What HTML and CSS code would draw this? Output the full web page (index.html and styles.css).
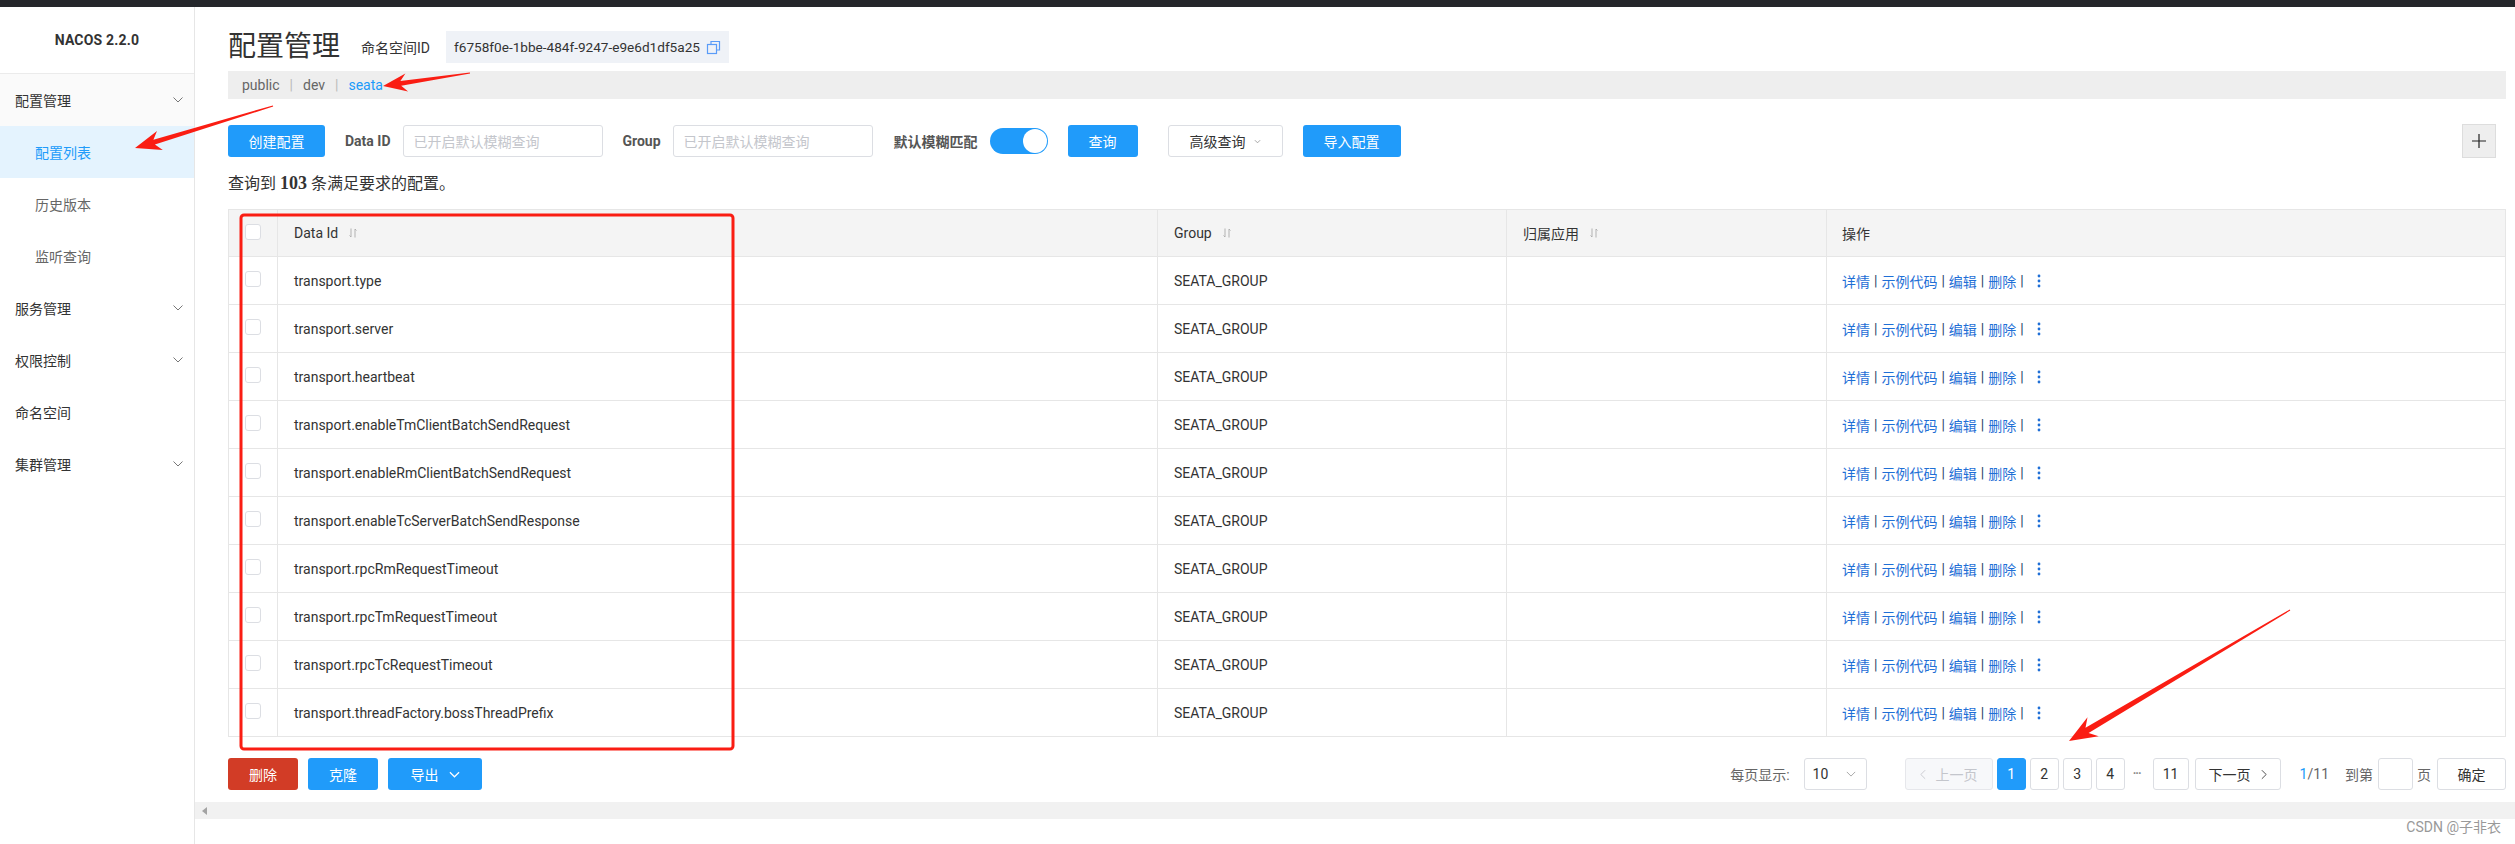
FILE: index.html
```html
<!DOCTYPE html>
<html lang="zh-CN">
<head>
<meta charset="utf-8">
<title>NACOS 配置管理</title>
<link rel="stylesheet" href="styles.css">
</head>
<body>
<div class="topbar"></div>
<div class="layout">
  <aside class="sidebar">
    <div class="logo">NACOS 2.2.0</div>
    <nav class="menu">
      <div class="menu-head open">配置管理<svg class="chev" viewBox="0 0 10 6"><polyline points="0.5,0.5 5,5 9.5,0.5"/></svg></div>
      <div class="menu-sub active">配置列表</div>
      <div class="menu-sub">历史版本</div>
      <div class="menu-sub">监听查询</div>
      <div class="menu-head">服务管理<svg class="chev" viewBox="0 0 10 6"><polyline points="0.5,0.5 5,5 9.5,0.5"/></svg></div>
      <div class="menu-head">权限控制<svg class="chev" viewBox="0 0 10 6"><polyline points="0.5,0.5 5,5 9.5,0.5"/></svg></div>
      <div class="menu-head">命名空间</div>
      <div class="menu-head">集群管理<svg class="chev" viewBox="0 0 10 6"><polyline points="0.5,0.5 5,5 9.5,0.5"/></svg></div>
    </nav>
  </aside>
  <main class="main">
    <div class="content">
      <div class="page-head">
        <h1 class="title">配置管理</h1>
        <span class="ns-label">命名空间ID</span>
        <span class="ns-id">f6758f0e-1bbe-484f-9247-e9e6d1df5a25<svg class="copy" viewBox="0 0 15 15"><path d="M5 4V1.5h8.5V10H11"/><rect x="1.5" y="4.5" width="9" height="9"/></svg></span>
      </div>
      <div class="crumbs">
        <span>public</span><span class="sep">|</span><span>dev</span><span class="sep">|</span><span class="cur">seata</span>
      </div>
      <div class="toolbar">
        <button class="btn primary w-create">创建配置</button>
        <span class="label">Data ID</span>
        <span class="input">已开启默认模糊查询</span>
        <span class="label">Group</span>
        <span class="input">已开启默认模糊查询</span>
        <span class="label fuzzy">默认模糊匹配</span>
        <span class="switch"><span class="knob"></span></span>
        <button class="btn primary w-query">查询</button>
        <button class="btn normal w-adv">高级查询<svg class="mini-chev" viewBox="0 0 8 5"><polyline points="1,1 4,4 7,1"/></svg></button>
        <button class="btn primary w-import">导入配置</button>
        <button class="btn plus"><svg viewBox="0 0 16 16"><path d="M8 1v14M1 8h14"/></svg></button>
      </div>
      <div class="result">查询到 <strong>103</strong> 条满足要求的配置。</div>
      <div class="table">
        <div class="row head">
          <div class="cell ck"><span class="checkbox"></span></div>
          <div class="cell">Data Id<svg class="sort" viewBox="0 0 8 10"><path d="M2 0.5v8.5M0.5 7.5L2 9M6 9.5V1M6 1L7.5 2.5"/></svg></div>
          <div class="cell">Group<svg class="sort" viewBox="0 0 8 10"><path d="M2 0.5v8.5M0.5 7.5L2 9M6 9.5V1M6 1L7.5 2.5"/></svg></div>
          <div class="cell">归属应用<svg class="sort" viewBox="0 0 8 10"><path d="M2 0.5v8.5M0.5 7.5L2 9M6 9.5V1M6 1L7.5 2.5"/></svg></div>
          <div class="cell">操作</div>
        </div>
        <div class="row"><div class="cell ck"><span class="checkbox"></span></div><div class="cell">transport.type</div><div class="cell">SEATA_GROUP</div><div class="cell"></div><div class="cell ops"><a>详情</a><i>|</i><a>示例代码</a><i>|</i><a>编辑</a><i>|</i><a>删除</a><i>|</i><svg class="more" viewBox="0 0 4 14"><circle cx="2" cy="2" r="1.4"/><circle cx="2" cy="7" r="1.4"/><circle cx="2" cy="12" r="1.4"/></svg></div></div>
        <div class="row"><div class="cell ck"><span class="checkbox"></span></div><div class="cell">transport.server</div><div class="cell">SEATA_GROUP</div><div class="cell"></div><div class="cell ops"><a>详情</a><i>|</i><a>示例代码</a><i>|</i><a>编辑</a><i>|</i><a>删除</a><i>|</i><svg class="more" viewBox="0 0 4 14"><circle cx="2" cy="2" r="1.4"/><circle cx="2" cy="7" r="1.4"/><circle cx="2" cy="12" r="1.4"/></svg></div></div>
        <div class="row"><div class="cell ck"><span class="checkbox"></span></div><div class="cell">transport.heartbeat</div><div class="cell">SEATA_GROUP</div><div class="cell"></div><div class="cell ops"><a>详情</a><i>|</i><a>示例代码</a><i>|</i><a>编辑</a><i>|</i><a>删除</a><i>|</i><svg class="more" viewBox="0 0 4 14"><circle cx="2" cy="2" r="1.4"/><circle cx="2" cy="7" r="1.4"/><circle cx="2" cy="12" r="1.4"/></svg></div></div>
        <div class="row"><div class="cell ck"><span class="checkbox"></span></div><div class="cell">transport.enableTmClientBatchSendRequest</div><div class="cell">SEATA_GROUP</div><div class="cell"></div><div class="cell ops"><a>详情</a><i>|</i><a>示例代码</a><i>|</i><a>编辑</a><i>|</i><a>删除</a><i>|</i><svg class="more" viewBox="0 0 4 14"><circle cx="2" cy="2" r="1.4"/><circle cx="2" cy="7" r="1.4"/><circle cx="2" cy="12" r="1.4"/></svg></div></div>
        <div class="row"><div class="cell ck"><span class="checkbox"></span></div><div class="cell">transport.enableRmClientBatchSendRequest</div><div class="cell">SEATA_GROUP</div><div class="cell"></div><div class="cell ops"><a>详情</a><i>|</i><a>示例代码</a><i>|</i><a>编辑</a><i>|</i><a>删除</a><i>|</i><svg class="more" viewBox="0 0 4 14"><circle cx="2" cy="2" r="1.4"/><circle cx="2" cy="7" r="1.4"/><circle cx="2" cy="12" r="1.4"/></svg></div></div>
        <div class="row"><div class="cell ck"><span class="checkbox"></span></div><div class="cell">transport.enableTcServerBatchSendResponse</div><div class="cell">SEATA_GROUP</div><div class="cell"></div><div class="cell ops"><a>详情</a><i>|</i><a>示例代码</a><i>|</i><a>编辑</a><i>|</i><a>删除</a><i>|</i><svg class="more" viewBox="0 0 4 14"><circle cx="2" cy="2" r="1.4"/><circle cx="2" cy="7" r="1.4"/><circle cx="2" cy="12" r="1.4"/></svg></div></div>
        <div class="row"><div class="cell ck"><span class="checkbox"></span></div><div class="cell">transport.rpcRmRequestTimeout</div><div class="cell">SEATA_GROUP</div><div class="cell"></div><div class="cell ops"><a>详情</a><i>|</i><a>示例代码</a><i>|</i><a>编辑</a><i>|</i><a>删除</a><i>|</i><svg class="more" viewBox="0 0 4 14"><circle cx="2" cy="2" r="1.4"/><circle cx="2" cy="7" r="1.4"/><circle cx="2" cy="12" r="1.4"/></svg></div></div>
        <div class="row"><div class="cell ck"><span class="checkbox"></span></div><div class="cell">transport.rpcTmRequestTimeout</div><div class="cell">SEATA_GROUP</div><div class="cell"></div><div class="cell ops"><a>详情</a><i>|</i><a>示例代码</a><i>|</i><a>编辑</a><i>|</i><a>删除</a><i>|</i><svg class="more" viewBox="0 0 4 14"><circle cx="2" cy="2" r="1.4"/><circle cx="2" cy="7" r="1.4"/><circle cx="2" cy="12" r="1.4"/></svg></div></div>
        <div class="row"><div class="cell ck"><span class="checkbox"></span></div><div class="cell">transport.rpcTcRequestTimeout</div><div class="cell">SEATA_GROUP</div><div class="cell"></div><div class="cell ops"><a>详情</a><i>|</i><a>示例代码</a><i>|</i><a>编辑</a><i>|</i><a>删除</a><i>|</i><svg class="more" viewBox="0 0 4 14"><circle cx="2" cy="2" r="1.4"/><circle cx="2" cy="7" r="1.4"/><circle cx="2" cy="12" r="1.4"/></svg></div></div>
        <div class="row"><div class="cell ck"><span class="checkbox"></span></div><div class="cell">transport.threadFactory.bossThreadPrefix</div><div class="cell">SEATA_GROUP</div><div class="cell"></div><div class="cell ops"><a>详情</a><i>|</i><a>示例代码</a><i>|</i><a>编辑</a><i>|</i><a>删除</a><i>|</i><svg class="more" viewBox="0 0 4 14"><circle cx="2" cy="2" r="1.4"/><circle cx="2" cy="7" r="1.4"/><circle cx="2" cy="12" r="1.4"/></svg></div></div>
      </div>
      <div class="footer-row">
        <button class="btn danger w-del">删除</button>
        <button class="btn primary w-clone">克隆</button>
        <button class="btn primary w-export">导出<svg class="exp-chev" viewBox="0 0 12 7"><polyline points="1,1 6,6 11,1"/></svg></button>
        <div class="pager">
          <span class="pg-label">每页显示:</span>
          <span class="pg-select">10<svg class="sel-chev" viewBox="0 0 12 7"><polyline points="1,1 6,6 11,1"/></svg></span>
          <span class="pg-btn prev disabled"><svg class="lr" viewBox="0 0 7 12"><polyline points="6,1 1,6 6,11"/></svg>上一页</span>
          <span class="pg-num active">1</span>
          <span class="pg-num">2</span>
          <span class="pg-num">3</span>
          <span class="pg-num">4</span>
          <span class="pg-ellipsis">···</span>
          <span class="pg-num wide">11</span>
          <span class="pg-btn next">下一页<svg class="lr" viewBox="0 0 7 12"><polyline points="1,1 6,6 1,11"/></svg></span>
          <span class="pg-count"><b>1</b>/11</span>
          <span class="pg-label goto">到第</span>
          <span class="pg-input"></span>
          <span class="pg-label page">页</span>
          <span class="pg-btn ok">确定</span>
        </div>
      </div>
    </div>
    <div class="hscroll"><svg class="scroll-arrow" viewBox="0 0 5 8"><polygon points="5,0 0,4 5,8"/></svg></div>
  </main>
</div>
<div class="watermark">CSDN @子非衣</div>
<svg class="annot" viewBox="0 0 2515 844">
  <rect x="241" y="215" width="492" height="534" rx="3" ry="3"/>
  <polygon class="arw" points="469.9,72.5 400.4,80.9 405.4,73.6 383,86 408.1,91.4 401.2,85.8 470.1,73.5"/>
  <polygon class="arw" points="272.8,105.4 153.4,139.8 157.0,130.9 135,148 162.8,150.0 154.9,144.6 273.2,106.6"/>
  <polygon class="arw" points="2289.7,609.5 2085.5,727.7 2087.5,717.3 2069,741 2098.7,736.2 2088.6,732.9 2290.3,610.5"/>
</svg>
</body>
</html>
```
FILE: styles.css
```css
* { box-sizing: border-box; margin: 0; padding: 0; }
html, body { width: 2515px; height: 844px; overflow: hidden; }
body {
  font-family: Roboto, "Noto Sans CJK SC", sans-serif;
  font-size: 14px;
  color: #333;
  background: #fff;
  position: relative;
}
.topbar { height: 7px; background: #25272b; }
.layout { display: flex; height: 837px; }

/* sidebar */
.sidebar { width: 195px; flex: none; border-right: 1px solid #e6e6e6; background: #fff; }
.logo {
  height: 67px; border-bottom: 1px solid #ebebeb;
  display: flex; align-items: center; justify-content: center;
  font-weight: 700; font-size: 14px; color: #333; letter-spacing: 0.2px;
}
.menu { display: flex; flex-direction: column; }
.menu-head, .menu-sub {
  height: 52px; display: flex; align-items: center; justify-content: space-between;
  padding: 0 11px 0 15px; font-size: 14px; color: #333;
}
.menu-head.open { background: #fafafa; }
.menu-sub { padding-left: 35px; color: #666; }
.menu-sub.active { background: #e4f3fe; color: #209bfa; }
.chev { width: 10px; height: 6px; fill: none; stroke: #777; stroke-width: 1; }

/* main */
.main { flex: 1; display: flex; flex-direction: column; min-width: 0; }
.content { padding: 24px 9px 0 33px; }
.page-head { display: flex; align-items: center; height: 32px; }
.title { font-size: 28px; font-weight: 400; line-height: 32px; color: #333; }
.ns-label { margin-left: 21px; font-size: 14px; color: #333; }
.ns-id {
  margin-left: 16px; height: 32px; padding: 0 8px; background: #eff2f7;
  display: flex; align-items: center; font-size: 13.6px; color: #333;
}
.copy { width: 15px; height: 15px; margin-left: 6px; fill: none; stroke: #5a9cf8; stroke-width: 1.2; }

.crumbs {
  margin-top: 8px; height: 28px; background: #eeeeee;
  display: flex; align-items: center; padding-left: 14px; font-size: 14px; color: #666;
}
.crumbs .sep { margin: 0 10px; color: #bbb; }
.crumbs .cur { color: #209bfa; }

.toolbar { margin-top: 26px; height: 32px; display: flex; align-items: center; }
.btn {
  height: 32px; border-radius: 3px; border: 1px solid transparent; font-size: 14px;
  font-family: inherit; display: inline-flex; align-items: center; justify-content: center;
  flex: none; cursor: pointer;
}
.primary { background: #209bfa; color: #fff; }
.danger { background: #d23c26; color: #fff; }
.normal { background: #fff; color: #333; border-color: #dcdee3; }
.w-create { width: 97px; }
.label { font-weight: 700; color: #555; margin-left: 20px; margin-right: 12px; }
.label.fuzzy { margin-left: 21px; margin-right: 12px; }
.input {
  width: 200px; height: 32px; border: 1px solid #dcdee3; border-radius: 3px;
  padding: 0 10px; display: flex; align-items: center; color: #c4c6cc;
}
.switch {
  width: 58px; height: 26px; border-radius: 13px; background: #209bfa;
  display: flex; align-items: center; justify-content: flex-end; padding: 0 1px;
}
.knob { width: 24px; height: 24px; border-radius: 50%; background: #fff; }
.w-query { width: 70px; margin-left: 20px; }
.w-adv { width: 115px; margin-left: 30px; }
.mini-chev { width: 7px; height: 5px; margin-left: 8px; fill: none; stroke: #999; stroke-width: 1; }
.w-import { width: 98px; margin-left: 20px; }
.plus { margin-left: auto; margin-right: 10px; width: 34px; height: 34px; background: #eeeeee; border-color: #dddddd; border-radius: 0; }
.plus svg { width: 16px; height: 16px; fill: none; stroke: #222; stroke-width: 1.2; }

.result { margin-top: 15px; line-height: 22px; font-size: 16px; color: #333; }
.result strong { font-family: "Liberation Serif", serif; font-size: 18px; font-weight: 700; }

/* table */
.table { margin-top: 14px; border: 1px solid #e6e6e6; border-bottom: none; }
.row {
  display: grid; grid-template-columns: 49px 880px 349px 320px 1fr;
  height: 48px; border-bottom: 1px solid #e6e6e6;
}
.row.head { height: 47px; background: #f4f4f4; }
.cell {
  display: flex; align-items: center; padding: 0 16px; border-right: 1px solid #e6e6e6;
  font-size: 14px; color: #333; white-space: nowrap; overflow: hidden;
}
.cell:last-child { border-right: none; padding-left: 15px; }
.cell.ck { justify-content: center; padding: 0; }
.checkbox { width: 16px; height: 16px; border: 1px solid #dcdee3; border-radius: 3px; background: #fff; margin-top: -3px; }
.sort { width: 8px; height: 10px; margin-left: 11px; fill: none; stroke: #aaa; stroke-width: 0.9; }
.ops a { color: #1f6fd6; text-decoration: none; }
.ops i { font-style: normal; color: #2a3f66; margin: 0 4px; }
.more { width: 4px; height: 14px; margin-left: 9px; fill: #1f6fd6; }

/* footer */
.footer-row { margin-top: 21px; height: 32px; display: flex; align-items: center; }
.w-del { width: 70px; }
.w-clone { width: 70px; margin-left: 10px; }
.w-export { width: 94px; margin-left: 10px; }
.exp-chev { width: 11px; height: 7px; margin-left: 10px; fill: none; stroke: #fff; stroke-width: 1.3; }

.pager { margin-left: auto; display: flex; align-items: center; height: 32px; }
.pg-label { color: #666; }
.pg-select {
  margin-left: 14px; width: 63px; height: 32px; border: 1px solid #dcdee3; border-radius: 3px;
  display: flex; align-items: center; justify-content: space-between; padding: 0 10px 0 8px; color: #333;
}
.sel-chev { width: 10px; height: 6px; fill: none; stroke: #999; stroke-width: 1; }
.pg-btn {
  height: 32px; border: 1px solid #dcdee3; border-radius: 3px; background: #fff;
  display: flex; align-items: center; justify-content: center; color: #333;
}
.lr { width: 6px; height: 11px; fill: none; stroke: currentColor; stroke-width: 1; }
.prev { margin-left: 38px; width: 88px; }
.prev .lr { margin-right: 10px; }
.disabled { background: #f7f8fa; border-color: #e6e7eb; color: #c4c6cc; }
.next { margin-left: 6px; width: 86px; }
.next .lr { margin-left: 10px; }
.pg-num {
  margin-left: 4px; width: 29px; height: 32px; border: 1px solid #dcdee3; border-radius: 3px;
  display: flex; align-items: center; justify-content: center; color: #333;
}
.pg-num.active { background: #209bfa; border-color: #209bfa; color: #fff; }
.pg-num.wide { width: 36px; }
.pg-ellipsis { width: 24px; text-align: center; color: #888; font-size: 12px; letter-spacing: -1px; font-weight: 700; }
.pg-count { margin-left: 19px; color: #666; }
.pg-count b { font-weight: 400; color: #209bfa; }
.goto { margin-left: 16px; }
.pg-input { margin-left: 5px; width: 35px; height: 32px; border: 1px solid #dcdee3; border-radius: 3px; }
.pg-label.page { margin-left: 4px; }
.ok { margin-left: 6px; width: 69px; }

.hscroll { margin-top: 12px; height: 17px; background: #f1f1f1; display: flex; align-items: center; padding-left: 7px; }
.scroll-arrow { width: 5px; height: 8px; fill: #a3a3a3; }

.watermark {
  position: absolute; right: 14px; bottom: 8px; font-size: 14px; color: #999;
}
.annot { position: absolute; left: 0; top: 0; width: 2515px; height: 844px; pointer-events: none; }
.annot rect { fill: none; stroke: #fa1d13; stroke-width: 3; }
.annot .arw { fill: #fa1d13; }
```
